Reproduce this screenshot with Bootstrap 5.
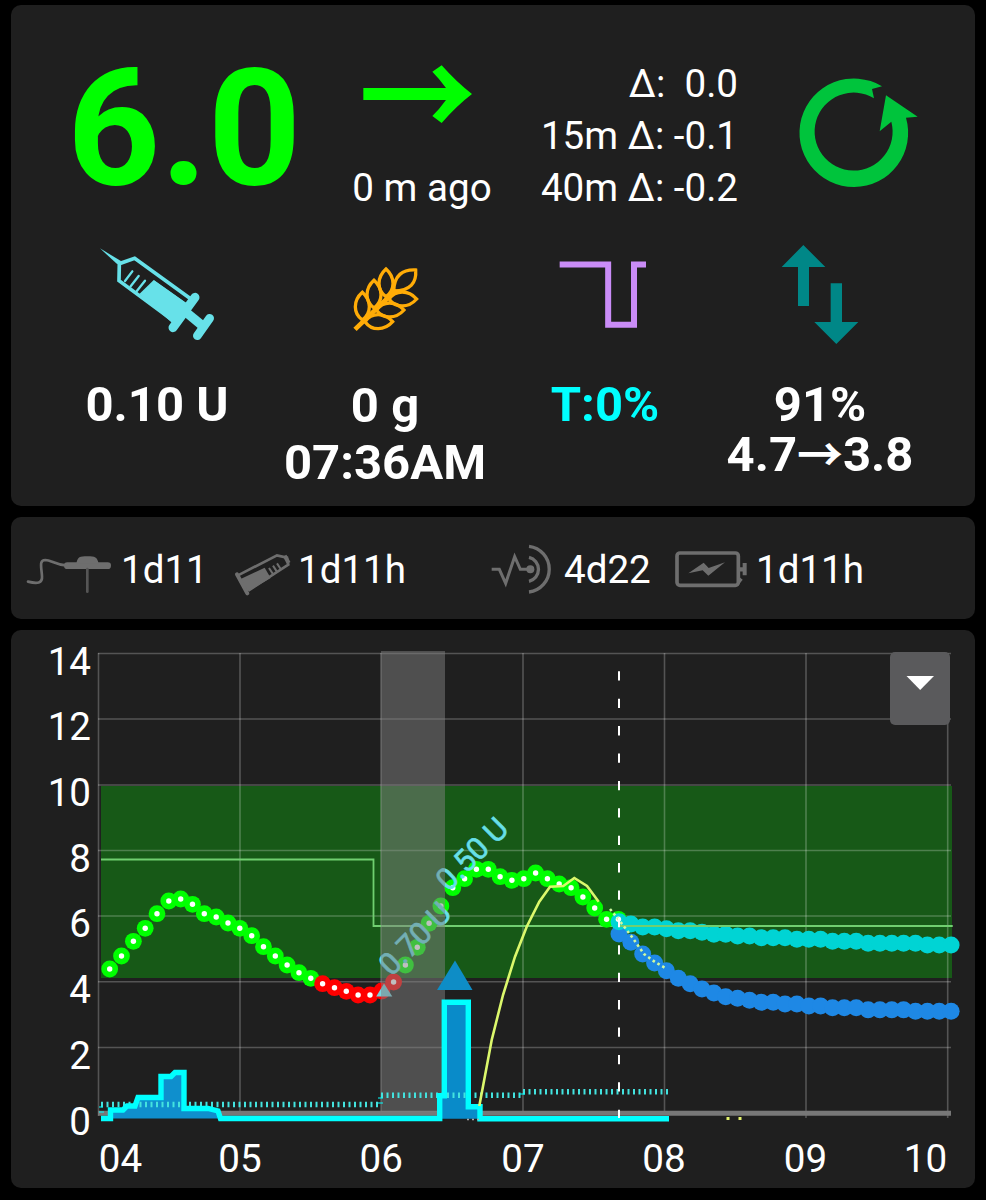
<!DOCTYPE html>
<html lang="en" data-bs-theme="dark">
<head>
<meta charset="utf-8">
<meta name="viewport" content="width=device-width, initial-scale=1">
<title>Glucose overview</title>
<link href="https://cdn.jsdelivr.net/npm/bootstrap@5.3.0/dist/css/bootstrap.min.css" rel="stylesheet">
<style>
  body { background: #000; color: #fff; font-family: Roboto, "Noto Sans", sans-serif; font-size: 38.6px; line-height: 52px; }
  .screen { width: 986px; height: 1200px; padding: 5px 11px 0; overflow: hidden; }
  .panel { background: #1f1f1f; border-radius: 10px; margin-bottom: 11px; overflow: hidden; }
  .panel svg { display: block; flex: none; }
  .overview { height: 501px; }
  .top-grid { display: grid; grid-template-columns: 299px 224px 207px 234px; height: 235px; }
  .glucose { font-size: 163px; line-height: 163px; font-weight: 700; color: #0f0; padding: 42px 0 0 56px; }
  .deltas { padding: 53px 3px 0 0; white-space: pre; }
  .stat-grid { display: grid; grid-template-columns: 224px 232px 208px 222px; padding-left: 34px; }
  .stat-text { font-size: 49px; line-height: 50px; font-weight: 700; padding-top: 30px; white-space: nowrap; }
  .stat-text.loose { line-height: 57px; padding-top: 27px; }
  .temp { color: #0ff; }
  .arrow-char { font-family: "Noto Sans CJK JP", sans-serif; font-size: 46px; font-weight: 700; line-height: 1px; }
  .ages { height: 102px; display: grid; grid-template-columns: 214px 255px 185px 310px; }
  .ages span { padding: 3px 0 0 1px; }
  .chart-panel { height: 558px; margin-bottom: 0; }
  .chart-menu { top: 22px; right: 25px; width: 60px; height: 73px; border-radius: 5px; background: #5a5a5c; border: 0; }
  .chart-panel text { font-family: Roboto, sans-serif; fill: #fff; }
  .chart-panel .bolus { fill: #67dfe8; stroke: #67dfe8; stroke-width: .6px; }
</style>
</head>
<body>
<main class="screen">
  <section class="panel overview">
    <div class="top-grid">
      <div class="glucose">6.0</div>
      <div class="text-center">
        <svg width="224" height="157" viewBox="930 15 672 471" fill="#0f0"><path d="M1090 264H1338Q1318 236 1297 215L1325 196Q1370 247 1416 282Q1370 317 1325 369L1297 348Q1318 328 1338 300H1090Z"/></svg>
        <div>0 m ago</div>
      </div>
      <div class="deltas text-end">Δ:  0.0
15m Δ: -0.1
40m Δ: -0.2</div>
      <svg width="234" height="235" viewBox="727 18 702 705" fill="#00c43c"><path d="M1150 262A163 163 0 1 0 1222 356L1257 353L1162 289L1143 397L1178 368A117 117 0 1 1 1126 298L1120 270Z"/></svg>
    </div>
    <div class="stat-grid text-center">
      <div>
        <svg width="224" height="110" viewBox="-45 30 672 330" fill="none" stroke="#67e1e9">
          <path d="M120 55L184 94L172 103Z" fill="#67e1e9" stroke="none"/>
          <path d="M400 212L224 85L178 101L177 152L340 272" stroke-width="11"/>
          <path d="M282 149L395 229L340 282L238 192Z" fill="#67e1e9" stroke="none"/>
          <path d="M276 141L382 216" stroke="#1f1f1f" stroke-width="7"/>
          <path d="M217 124L195 153M236 138L212 169M255 152L230 184" stroke-width="7" stroke-linecap="round"/>
          <path d="M405 202L339 293" stroke-width="27" stroke-linecap="round"/>
          <path d="M370 240L426 286" stroke-width="28"/>
          <path d="M449 265L412 317" stroke-width="26" stroke-linecap="round"/>
        </svg>
        <div class="stat-text">0.10 U</div>
      </div>
      <div>
        <svg width="232" height="110" viewBox="627 30 696 330" fill="none" stroke="#ffac07" stroke-width="10">
          <defs><path id="kernel" d="M0 -43C28 -18 28 20 0 40C-28 20 -28 -18 0 -43Z"/></defs>
          <path d="M885 298L1008 180" stroke-width="14"/>
          <use href="#kernel" transform="translate(907 230)"/>
          <use href="#kernel" transform="translate(942 194)"/>
          <use href="#kernel" transform="translate(978 160)"/>
          <use href="#kernel" transform="translate(1027 207) rotate(90)"/>
          <use href="#kernel" transform="translate(989 240) rotate(90)"/>
          <use href="#kernel" transform="translate(955 275) rotate(90)"/>
          <path d="M1067 120C1028 118 1002 136 1001 183C1052 182 1070 158 1067 120Z"/>
        </svg>
        <div class="stat-text loose">0 g<br>07:36AM</div>
      </div>
      <div>
        <svg width="208" height="110" viewBox="-57 30 624 330" fill="none" stroke="#ca8cf7" stroke-width="18"><path d="M119 103.500H264.500V284.500H342V103.500H378"/></svg>
        <div class="stat-text temp">T:0%</div>
      </div>
      <div>
        <svg width="222" height="110" viewBox="567 30 666 330" fill="#008787"><path d="M850 45L916 111H867V228H834V111H785ZM949 342L1015 276H966V160H932V276H883Z"/></svg>
        <div class="stat-text">91%<br>4.7<span class="arrow-char">→</span>3.8</div>
      </div>
    </div>
  </section>

  <section class="panel ages">
    <div class="d-flex align-items-center">
      <svg width="109" height="101" viewBox="33 21 327 303" fill="none" stroke="#6e6e6e" stroke-linecap="round">
        <path d="M84 212C112 219 128 217 126 195C124 166 117 148 136 147C154 147 166 162 202 164" stroke-width="8"/>
        <path d="M202 164H323" stroke-width="20"/>
        <path d="M229 158C233 137 239 136 262 136C286 136 291 138 296 158Z" fill="#6e6e6e" stroke="none"/>
        <path d="M262 174V242" stroke="#555" stroke-width="8"/>
      </svg><span>1d11</span>
    </div>
    <div class="d-flex align-items-center">
      <svg width="72" height="101" viewBox="675 21 216 303" fill="none" stroke="#6e6e6e">
        <path d="M714 193L831 133L861 140L865 161L745 239" stroke-width="8"/>
        <path d="M722 204L794 170L812 201L743 241Z" fill="#6e6e6e" stroke="none"/>
        <path d="M711 190L742 247" stroke-width="12" stroke-linecap="round"/>
        <path d="M807 171L820 191M819 164L832 184M831 157L844 177" stroke-width="6"/>
        <path d="M854 134L866 156" stroke-width="12"/>
      </svg><span>1d11h</span>
    </div>
    <div class="d-flex align-items-center">
      <svg width="83" height="101" viewBox="30 21 249 303" fill="none" stroke="#6e6e6e" stroke-width="9">
        <path d="M65 175H88L107 217L134 137L151 175H181"/>
        <circle cx="181" cy="175" r="12" fill="#6e6e6e" stroke="none"/>
        <path d="M177 139A37 37 0 0 1 177 211M177 106A69 69 0 0 1 177 243" stroke-width="10"/>
      </svg><span>4d22</span>
    </div>
    <div class="d-flex align-items-center">
      <svg width="90" height="101" viewBox="585 21 270 303" fill="none" stroke="#6e6e6e" stroke-width="11">
        <rect x="621" y="126" width="184" height="97" rx="9"/>
        <path d="M655 187L701 155L716 171L765 154L715 194L698 178Z" fill="#6e6e6e" stroke="none"/>
        <path d="M808 175H820" stroke-width="13"/><path d="M824 156V193" stroke-width="12"/>
        <path d="M808 198L818 206L804 224Z" fill="#6e6e6e" stroke="none"/>
      </svg><span>1d11h</span>
    </div>
  </section>

  <section class="panel chart-panel position-relative">
    <svg width="964" height="558" viewBox="11 630 964 558">
      <rect x="101" y="786" width="851" height="192" fill="#175917"/>
      <g stroke="#fff" stroke-opacity=".24" stroke-width="1.600" fill="none">
        <path d="M98 653.500H951M98 719H951M98 785H951M98 850.500H951M98 916H951M98 981.700H951M98 1047.500H951"/>
        <path d="M98.500 653V1116M240 653V1111M381 653V1111M523 653V1111M664.500 653V1111M806 653V1118M947.700 653V1118"/>
      </g>
      <path d="M98 1113.300H951" stroke="#777" stroke-width="5"/>
      <path d="M101 859.500H373.500V926H952.500" fill="none" stroke="#70cf70" stroke-width="1.800"/>
      <g id="dots"></g>
      <path d="M384 983.500L392.300 996.500H376.200Z" fill="#78d3dd"/>
      <g font-size="30.800">
        <text class="bolus" transform="translate(448.500 892.500) rotate(-45)">0.50 U</text>
        <text class="bolus" transform="translate(391.500 977.200) rotate(-45)">0.70 U</text>
      </g>
      <rect x="381" y="651" width="64" height="461" fill="#808080" fill-opacity=".5"/>
      <path d="M455 960.500L472.500 990H437Z" fill="#0e8dc6"/>
      <path d="M110.500 1118.500V1110H123L127 1106H135L138 1097.500H161V1076.500H171L175 1072.500H184V1108.500H208L218 1111L220.500 1118.500Z" fill="#0f8fcd"/>
      <path d="M439.700 1118.700V1095.700H444.300V1002.300H468.300V1106.700H480V1118.700Z" fill="#098bc9"/>
      <path d="M101 1104.500H380M381 1095.200H522M523 1091.800H668" stroke="#43e3df" stroke-width="5.500" stroke-dasharray="2 3.500" fill="none"/>
      <path d="M99 1107H103M99 1112H104M378 1103H383M378 1098H383M519 1094H525" stroke="#0ff" stroke-width="1.200"/>
      <path d="M101 1118.500H110.500V1110H123L127 1106H135L138 1097.500H161V1076.500H171L175 1072.500H184V1108.500H208L218 1111L220.500 1118.500H439.700V1095.700H444.300V1002.300H468.300V1106.700H480V1118.700H669" fill="none" stroke="#0ff" stroke-width="5.400"/>
      <path d="M479.300 1106L491.700 1040L503 995L515 956.700L526.700 926.700L539.300 901.700L550 886.700L563.300 886L574.300 878L587 886L598.700 901.700" fill="none" stroke="#dcf86c" stroke-width="2.600"/>
      <path d="M610 909L619 920L632 937L644 954L655 962L667 969" fill="none" stroke="#d0f8a0" stroke-width="2.600" stroke-dasharray="2.600 3"/>
      <path d="M726.500 1118.500H729.500M738.500 1118.500H741.500" stroke="#e4f36b" stroke-width="3"/>
      <path d="M467 1119.500H469M472 1119.500H474M477 1119.500H479" stroke="#aaa" stroke-width="1.500"/>
      <path d="M619 671.300V1118" stroke="#fff" stroke-width="2" stroke-dasharray="9.300 18.100"/>
      <g font-size="38.600" text-anchor="end">
        <text x="91" y="674.500">14</text><text x="91" y="740">12</text><text x="91" y="806">10</text><text x="91" y="871.500">8</text>
        <text x="91" y="937.300">6</text><text x="91" y="1003">4</text><text x="91" y="1069">2</text><text x="91" y="1134.700">0</text>
      </g>
      <g font-size="38.600" text-anchor="middle">
        <text x="120.500" y="1171.700">04</text><text x="240" y="1171.700">05</text><text x="381.300" y="1171.700">06</text><text x="523" y="1171.700">07</text>
        <text x="664" y="1171.700">08</text><text x="805.500" y="1171.700">09</text><text x="925.500" y="1171.700">10</text>
      </g>
    </svg>
    <button class="chart-menu position-absolute p-0" aria-label="Chart menu">
      <svg width="60" height="73" viewBox="890 652 60 73"><path d="M906.500 676H934L920.200 690Z" fill="#fff"/></svg>
    </button>
  </section>
</main>
<script>
  const readings = [969,956,941.3,928.3,913.7,901,899,904.3,913.7,917,923,928.3,935.7,946.7,956,965,972.7,978.3,983.7,987.7,991.3,995,995,991,982,965,947.3,923.3,906,887.7,878.7,869.3,869.3,876.7,880.3,878.7,873,878.7,884,887.7,897,908,919.3,919.3];
  const uam = [921.7,924,927,927,928.7,930.7,930.7,932.3,934.3,934.3,936,936,937.7,937.7,937.7,939.3,939.3,939.3,941.3,941.3,941.3,943.3,943.3,943.3,943.3,943.3,945,945,945];
  const iob = [934,942.3,954,963,970.7,978.3,983.7,989,993,996.7,998.3,1000.3,1002.3,1002.3,1004,1004,1006,1006,1007.7,1007.7,1007.7,1009.7,1009.7,1009.7,1009.7,1011.3,1011.3,1011.3,1011.3];
  const dot = (x, y, r, fill) => `<circle cx="${x.toFixed(1)}" cy="${y}" r="${r}" fill="${fill}"/>`;
  let out = readings.map((y, i) => dot(109.7 + 11.83 * i, y, 8.4, i > 17 && i < 25 ? '#f00' : '#0f0')).join('');
  out += iob.map((y, i) => dot(619 + 11.86 * i, y, 8.5, '#1e88e5')).join('');
  out += uam.map((y, i) => dot(619 + 11.86 * i, y, 8.5, '#00d4d4')).join('');
  out += readings.map((y, i) => i === 23 ? '' : dot(109.7 + 11.83 * i, y, 2.7, '#fff')).join('');
  out += '<path d="M619 926H952.500" stroke="#70cf70" stroke-width="1.800"/>';
  document.getElementById('dots').innerHTML = out;
</script>
<script src="https://cdn.jsdelivr.net/npm/bootstrap@5.3.0/dist/js/bootstrap.bundle.min.js"></script>
</body>
</html>
